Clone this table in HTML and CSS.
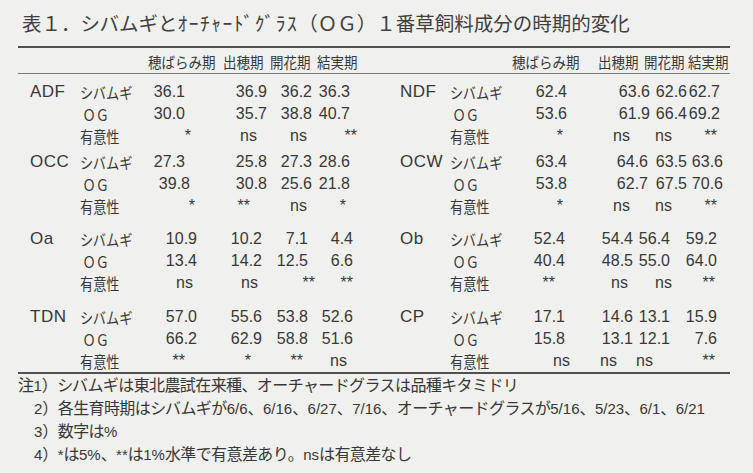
FILE: index.html
```html
<!DOCTYPE html>
<html lang="ja">
<head>
<meta charset="utf-8">
<title>表1</title>
<link rel="stylesheet" href="styles.css">
</head>
<body>
<div class="page">
  <h1 class="title">表１．シバムギと<span class="hk">ｵｰﾁｬｰﾄﾞｸﾞﾗｽ</span>（ＯＧ）１番草飼料成分の時期的変化</h1>
  <div class="table">
    <div class="half half-left">
      <div class="head head-left"><span>穂ばらみ期</span><span>出穂期</span><span>開花期</span><span>結実期</span></div>
      <div class="body">
        <div class="grp">
          <div class="row r-a"><span class="lab">ADF</span><span class="sp">シバムギ</span><span class="v">36.1</span><span class="v">36.9</span><span class="v">36.2</span><span class="v">36.3</span></div>
          <div class="row r-a"><span class="lab"></span><span class="sp og">ＯＧ</span><span class="v">30.0</span><span class="v">35.7</span><span class="v">38.8</span><span class="v">40.7</span></div>
          <div class="row s-adf"><span class="lab"></span><span class="sp">有意性</span><span class="v">*</span><span class="v">ns</span><span class="v">ns</span><span class="v">**</span></div>
        </div>
        <div class="grp grp-2">
          <div class="row r-a"><span class="lab">OCC</span><span class="sp">シバムギ</span><span class="v">27.3</span><span class="v">25.8</span><span class="v">27.3</span><span class="v">28.6</span></div>
          <div class="row r-a2"><span class="lab"></span><span class="sp og">ＯＧ</span><span class="v">39.8</span><span class="v">30.8</span><span class="v">25.6</span><span class="v">21.8</span></div>
          <div class="row s-occ"><span class="lab"></span><span class="sp">有意性</span><span class="v">*</span><span class="v">**</span><span class="v">ns</span><span class="v">*</span></div>
        </div>
        <div class="grp grp-3">
          <div class="row r-b"><span class="lab">Oa</span><span class="sp">シバムギ</span><span class="v">10.9</span><span class="v">10.2</span><span class="v">7.1</span><span class="v">4.4</span></div>
          <div class="row r-b"><span class="lab"></span><span class="sp og">ＯＧ</span><span class="v">13.4</span><span class="v">14.2</span><span class="v">12.5</span><span class="v">6.6</span></div>
          <div class="row s-oa"><span class="lab"></span><span class="sp">有意性</span><span class="v">ns</span><span class="v">ns</span><span class="v">**</span><span class="v">**</span></div>
        </div>
        <div class="grp grp-4">
          <div class="row r-b"><span class="lab">TDN</span><span class="sp">シバムギ</span><span class="v">57.0</span><span class="v">55.6</span><span class="v">53.8</span><span class="v">52.6</span></div>
          <div class="row r-b"><span class="lab"></span><span class="sp og">ＯＧ</span><span class="v">66.2</span><span class="v">62.9</span><span class="v">58.8</span><span class="v">51.6</span></div>
          <div class="row s-tdn"><span class="lab"></span><span class="sp">有意性</span><span class="v">**</span><span class="v">*</span><span class="v">**</span><span class="v">ns</span></div>
        </div>
      </div>
    </div>
    <div class="half half-right">
      <div class="head head-right"><span>穂ばらみ期</span><span>出穂期</span><span>開花期</span><span>結実期</span></div>
      <div class="body">
        <div class="grp">
          <div class="row r-c"><span class="lab">NDF</span><span class="sp">シバムギ</span><span class="v">62.4</span><span class="v">63.6</span><span class="v">62.6</span><span class="v">62.7</span></div>
          <div class="row r-c"><span class="lab"></span><span class="sp og">ＯＧ</span><span class="v">53.6</span><span class="v">61.9</span><span class="v">66.4</span><span class="v">69.2</span></div>
          <div class="row s-ndf"><span class="lab"></span><span class="sp">有意性</span><span class="v">*</span><span class="v">ns</span><span class="v">ns</span><span class="v">**</span></div>
        </div>
        <div class="grp grp-2">
          <div class="row r-c2"><span class="lab">OCW</span><span class="sp">シバムギ</span><span class="v">63.4</span><span class="v">64.6</span><span class="v">63.5</span><span class="v">63.6</span></div>
          <div class="row r-c2"><span class="lab"></span><span class="sp og">ＯＧ</span><span class="v">53.8</span><span class="v">62.7</span><span class="v">67.5</span><span class="v">70.6</span></div>
          <div class="row s-ndf"><span class="lab"></span><span class="sp">有意性</span><span class="v">*</span><span class="v">ns</span><span class="v">ns</span><span class="v">**</span></div>
        </div>
        <div class="grp grp-3">
          <div class="row r-d"><span class="lab">Ob</span><span class="sp">シバムギ</span><span class="v">52.4</span><span class="v">54.4</span><span class="v">56.4</span><span class="v">59.2</span></div>
          <div class="row r-d"><span class="lab"></span><span class="sp og">ＯＧ</span><span class="v">40.4</span><span class="v">48.5</span><span class="v">55.0</span><span class="v">64.0</span></div>
          <div class="row s-ob"><span class="lab"></span><span class="sp">有意性</span><span class="v">**</span><span class="v">ns</span><span class="v">ns</span><span class="v">**</span></div>
        </div>
        <div class="grp grp-4">
          <div class="row r-d"><span class="lab">CP</span><span class="sp">シバムギ</span><span class="v">17.1</span><span class="v">14.6</span><span class="v">13.1</span><span class="v">15.9</span></div>
          <div class="row r-d"><span class="lab"></span><span class="sp og">ＯＧ</span><span class="v">15.8</span><span class="v">13.1</span><span class="v">12.1</span><span class="v">7.6</span></div>
          <div class="row s-cp"><span class="lab"></span><span class="sp">有意性</span><span class="v">ns</span><span class="v">ns</span><span class="v">ns</span><span class="v">**</span></div>
        </div>
      </div>
    </div>
  </div>
  <div class="notes">
    <p><span class="j">注</span>1<span class="j">）シバムギは東北農試在来種、オーチャードグラスは品種キタミドリ</span></p>
    <p class="ind">2<span class="j">）各生育時期はシバムギが</span>6/6<span class="j">、</span>6/16<span class="j">、</span>6/27<span class="j">、</span>7/16<span class="j">、オーチャードグラスが</span>5/16<span class="j">、</span>5/23<span class="j">、</span>6/1<span class="j">、</span>6/21</p>
    <p class="ind">3<span class="j">）数字は</span>%</p>
    <p class="ind">4<span class="j">）</span>*<span class="j">は</span>5%<span class="j">、</span>**<span class="j">は</span>1%<span class="j">水準で有意差あり。</span>ns<span class="j">は有意差なし</span></p>
  </div>
</div>
</body>
</html>
```

FILE: styles.css
```css
html, body {
  margin: 0;
  padding: 0;
  background: #f0f0ee;
}

body {
  width: 753px;
  height: 473px;
  overflow: hidden;
  color: #383838;
  font-family: "Liberation Sans", "Noto Sans CJK JP", sans-serif;
}

.page {
  width: 712px;
  margin-left: 18px;
}

.title {
  margin: 0;
  height: 46px;
  line-height: 46px;
  padding-left: 4px;
  font-family: "Noto Sans CJK JP", sans-serif;
  font-size: 19.5px;
  font-weight: normal;
  color: #404040;
  white-space: nowrap;
}

.title .hk {
  letter-spacing: 1.5px;
}

.table {
  display: flex;
  border-top: 2px solid #505050;
  border-bottom: 2px solid #505050;
}

.half-left {
  width: 358px;
  --lab: 62px;
  --sp: 60px;
  --labpad: 12px;
}

.half-right {
  flex: 1;
  --lab: 74px;
  --sp: 60px;
  --labpad: 24px;
}

.head {
  display: grid;
  height: 20px;
  line-height: 20px;
  padding-top: 4px;
  padding-bottom: 1px;
  border-bottom: 1px solid #7a7a7a;
  font-family: "Noto Sans CJK JP", sans-serif;
  font-size: 15px;
  white-space: nowrap;
}

.head span {
  transform: scaleX(0.9);
  transform-origin: left center;
}

.head-left {
  padding-left: 130px;
  grid-template-columns: 75px 47px 47px 40px;
}

.head-right {
  padding-left: 136px;
  grid-template-columns: 86px 46px 44px 40px;
}

.body {
  padding-top: 7px;
}

.grp-2 { margin-top: 4px; }
.grp-3 { margin-top: 11px; }
.grp-4 { margin-top: 12px; }

.row {
  display: grid;
  grid-template-columns: var(--lab) var(--sp) var(--c1) var(--c2) var(--c3) var(--c4);
  height: 22px;
  line-height: 22px;
  align-items: center;
  white-space: nowrap;
}

.lab {
  padding-left: var(--labpad);
  font-size: 17px;
  letter-spacing: 0.5px;
}

.sp {
  font-family: "Noto Sans CJK JP", sans-serif;
  font-size: 15.5px;
  transform: scaleX(0.85);
  transform-origin: left center;
}

.sp.og {
  padding-left: 3px;
}

.v {
  text-align: right;
  font-size: 16px;
}

/* column widths, left half */
.r-a   { --c1: 45px; --c2: 82px; --c3: 45px; --c4: 38px; }
.r-a2  { --c1: 50px; --c2: 77px; --c3: 45px; --c4: 38px; }
.r-b   { --c1: 57px; --c2: 65px; --c3: 46px; --c4: 45px; }
.s-adf { --c1: 51px; --c2: 66px; --c3: 50px; --c4: 50px; }
.s-occ { --c1: 55px; --c2: 55px; --c3: 57px; --c4: 39px; }
.s-oa  { --c1: 53px; --c2: 65px; --c3: 57px; --c4: 38px; }
.s-tdn { --c1: 45px; --c2: 66px; --c3: 52px; --c4: 44px; }

/* column widths, right half */
.r-c   { --c1: 57px; --c2: 83px; --c3: 37px; --c4: 33px; }
.r-c2  { --c1: 57px; --c2: 81px; --c3: 39px; --c4: 36px; }
.r-d   { --c1: 55px; --c2: 68px; --c3: 37px; --c4: 47px; }
.s-ndf { --c1: 53px; --c2: 67px; --c3: 42px; --c4: 45px; }
.s-ob  { --c1: 45px; --c2: 73px; --c3: 44px; --c4: 43px; }
.s-cp  { --c1: 60px; --c2: 47px; --c3: 36px; --c4: 62px; }

.notes {
  padding-top: 1px;
  font-size: 15px;
}

.notes p {
  margin: 0 0 5px;
  height: 18px;
  line-height: 18px;
  white-space: nowrap;
}

.notes .j {
  font-family: "Noto Sans CJK JP", sans-serif;
  font-size: 16px;
  letter-spacing: -0.6px;
}

.notes .ind {
  padding-left: 16px;
}
```
